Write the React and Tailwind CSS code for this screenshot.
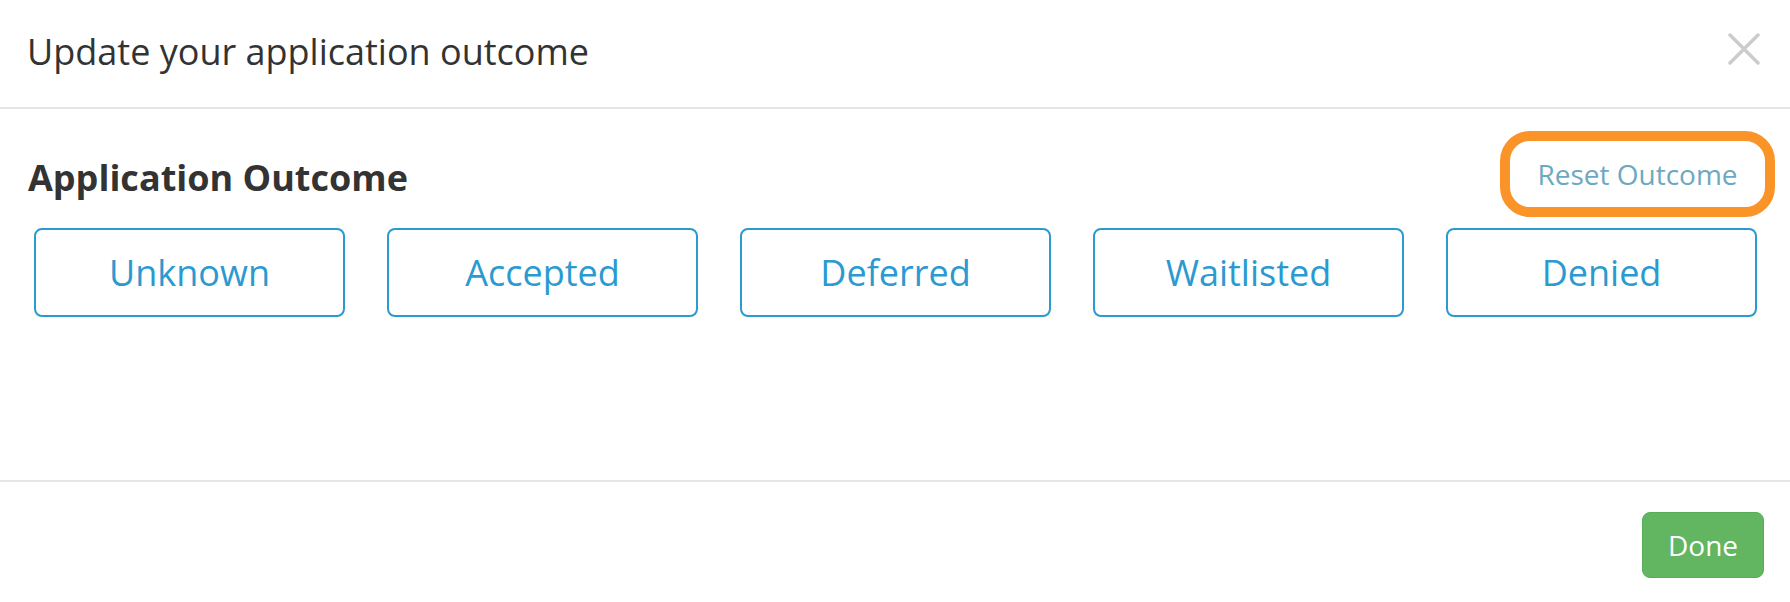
import React from 'react';

const outcomes = ['Unknown', 'Accepted', 'Deferred', 'Waitlisted', 'Denied'];

const CloseIcon = () => (
  <svg width="32" height="32" viewBox="0 0 32 32" className="mt-[7px]">
    <path d="M2 2 L30 30 M30 2 L2 30" stroke="#cccccc" strokeWidth="3.5" strokeLinecap="round" fill="none" />
  </svg>
);

const App = () => {
  return (
    <div className="w-[1790px] h-[602px] bg-white flex flex-col font-['Open_Sans',sans-serif] text-[#333333]">
      {/* header */}
      <div className="h-[109px] shrink-0 flex justify-between items-start pt-[26px] pl-[27px] pr-[30px] border-b-2 border-[#e5e5e5]">
        <h4 className="text-[36px] leading-[51px] font-normal">Update your application outcome</h4>
        <CloseIcon />
      </div>

      {/* body */}
      <div className="flex-1 border-b-2 border-[#e5e5e5]">
        <div className="flex justify-between items-start pt-[22px] pl-[28px] pr-[15px]">
          <h3 className="mt-[21px] text-[36px] leading-[51px] font-bold">Application Outcome</h3>
          <button className="w-[275px] h-[86px] border-[10px] border-[#fb9428] rounded-[30px] bg-white text-[28px] text-[#6ca9c0] flex items-center justify-center">
            Reset Outcome
          </button>
        </div>
        <div className="grid grid-cols-5 gap-[42px] mt-[11px] pl-[34px] pr-[33px]">
          {outcomes.map((o) => (
            <button
              key={o}
              className="h-[89px] border-2 border-[#2a9ad0] rounded-[8px] bg-white text-[36px] text-[#2a9ad0] flex items-center justify-center"
            >
              {o}
            </button>
          ))}
        </div>
      </div>

      {/* footer */}
      <div className="h-[120px] shrink-0 flex justify-end items-start pt-[30px] pr-[26px]">
        <button className="w-[122px] h-[66px] rounded-[8px] bg-[#62b662] border border-[#58ad58] text-white text-[28px] flex items-center justify-center">
          Done
        </button>
      </div>
    </div>
  );
};

export default App;
